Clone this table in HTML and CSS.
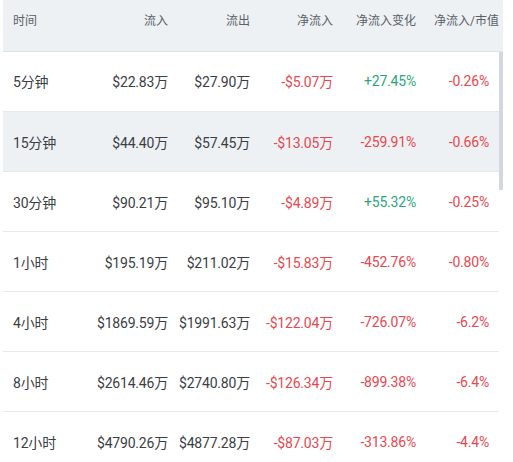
FILE: index.html
```html
<!DOCTYPE html>
<html lang="zh-CN">

<head>
    <meta charset="UTF-8">
    <meta name="viewport" content="width=device-width, initial-scale=1.0">
    <title>资金流向</title>
    <link rel="stylesheet" href="styles.css">
</head>

<body>
    <div class="flow-panel">
        <table class="flow-head">
            <colgroup>
                <col class="c-time"><col class="c-num"><col class="c-num2"><col class="c-num"><col class="c-num"><col class="c-last-head">
            </colgroup>
            <tr>
                <th class="left">时间</th>
                <th>流入</th>
                <th>流出</th>
                <th>净流入</th>
                <th>净流入变化</th>
                <th class="last">净流入/市值</th>
            </tr>
        </table>

        <div class="flow-body">
            <table class="flow-table">
                <colgroup>
                    <col class="c-time"><col class="c-num"><col class="c-num2"><col class="c-num"><col class="c-num"><col class="c-last">
                </colgroup>
                <tr>
                    <td class="left">5分钟</td>
                    <td>$22.83万</td>
                    <td>$27.90万</td>
                    <td class="down">-$5.07万</td>
                    <td class="up">+27.45%</td>
                    <td class="down">-0.26%</td>
                </tr>
                <tr class="hover">
                    <td class="left">15分钟</td>
                    <td>$44.40万</td>
                    <td>$57.45万</td>
                    <td class="down">-$13.05万</td>
                    <td class="down">-259.91%</td>
                    <td class="down">-0.66%</td>
                </tr>
                <tr>
                    <td class="left">30分钟</td>
                    <td>$90.21万</td>
                    <td>$95.10万</td>
                    <td class="down">-$4.89万</td>
                    <td class="up">+55.32%</td>
                    <td class="down">-0.25%</td>
                </tr>
                <tr>
                    <td class="left">1小时</td>
                    <td>$195.19万</td>
                    <td>$211.02万</td>
                    <td class="down">-$15.83万</td>
                    <td class="down">-452.76%</td>
                    <td class="down">-0.80%</td>
                </tr>
                <tr>
                    <td class="left">4小时</td>
                    <td>$1869.59万</td>
                    <td>$1991.63万</td>
                    <td class="down">-$122.04万</td>
                    <td class="down">-726.07%</td>
                    <td class="down">-6.2%</td>
                </tr>
                <tr>
                    <td class="left">8小时</td>
                    <td>$2614.46万</td>
                    <td>$2740.80万</td>
                    <td class="down">-$126.34万</td>
                    <td class="down">-899.38%</td>
                    <td class="down">-6.4%</td>
                </tr>
                <tr>
                    <td class="left">12小时</td>
                    <td>$4790.26万</td>
                    <td>$4877.28万</td>
                    <td class="down">-$87.03万</td>
                    <td class="down">-313.86%</td>
                    <td class="down">-4.4%</td>
                </tr>
            </table>
            <div class="scroll-track">
                <div class="scroll-thumb"></div>
            </div>
        </div>
    </div>
</body>

</html>
```

FILE: styles.css
```css
body {
    margin: 0;
    padding: 0;
    background-color: #fff;
    font-family: Roboto, "Noto Sans CJK SC", sans-serif;
    color: #3b3e45;
}

.flow-panel {
    width: 500px;
    padding-left: 3px;
}

table {
    border-collapse: collapse;
    table-layout: fixed;
}

.c-time {
    width: 92px;
}

.c-num {
    width: 83px;
}

.c-num2 {
    width: 82px;
}

.c-last {
    width: 73px;
}

.c-last-head {
    width: 77px;
}

.flow-head {
    width: 500px;
    background-color: #eef1f4;
    border-bottom: 1px solid #e1e4e8;
}

.flow-head th {
    height: 51px;
    padding: 12px 10px 0 0;
    box-sizing: border-box;
    vertical-align: top;
    text-align: right;
    font-size: 12px;
    line-height: 18px;
    font-weight: normal;
    color: #5a5f68;
    white-space: nowrap;
}

.flow-head th.last {
    padding-right: 4px;
}

.flow-body {
    display: flex;
}

.flow-table {
    width: 496px;
}

.flow-table td {
    height: 60px;
    padding: 0 10px 0 0;
    box-sizing: border-box;
    border-bottom: 1px solid #e6e8eb;
    text-align: right;
    font-size: 14px;
    letter-spacing: -0.2px;
    white-space: nowrap;
    color: #3b3e45;
}

.flow-table tr.hover td {
    background-color: #eef1f4;
}

th.left,
td.left {
    text-align: left;
    padding-left: 10px;
}

.down {
    color: #e8474f !important;
}

.up {
    color: #2aa67c !important;
}

.scroll-track {
    width: 4px;
    flex-shrink: 0;
}

.scroll-thumb {
    height: 138px;
    background-color: #d3d7df;
}
```
